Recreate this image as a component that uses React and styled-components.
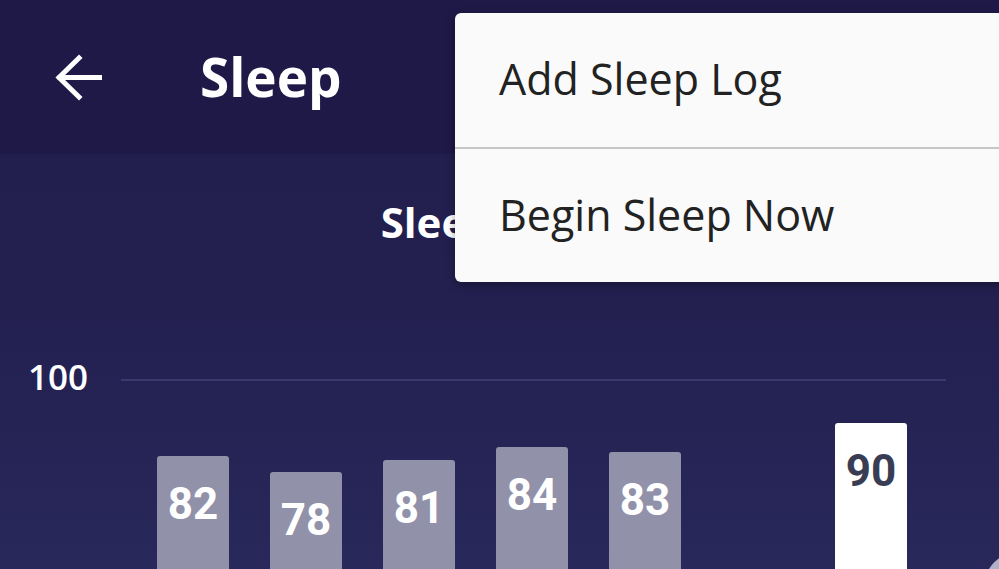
import React from "react";
import styled, { createGlobalStyle } from "styled-components";

const GlobalStyle = createGlobalStyle`
  html, body {
    margin: 0;
    padding: 0;
    background: #221c4c;
  }
  * { box-sizing: border-box; }
`;

const Screen = styled.div`
  position: relative;
  width: 999px;
  height: 569px;
  overflow: hidden;
  display: flex;
  flex-direction: column;
  font-family: "Open Sans", "Liberation Sans", sans-serif;
  background: linear-gradient(180deg, #221c4c 0%, #232050 55%, #28285a 100%);
`;

const Header = styled.header`
  height: 155px;
  flex: none;
  display: flex;
  align-items: center;
  padding-left: 54px;
  background: #1f1948;
  border-bottom: 1px solid #221d4c;
`;

const BackButton = styled.button`
  width: 48px;
  height: 48px;
  padding: 0;
  border: 0;
  background: none;
  display: flex;
  align-items: center;
  justify-content: center;
  cursor: pointer;
`;

const Title = styled.h1`
  margin: 0 0 0 98px;
  font-size: 53px;
  font-weight: 700;
  color: #ffffff;
  line-height: 1;
  padding-bottom: 2px;
`;

const Body = styled.main`
  flex: 1;
  display: flex;
  flex-direction: column;
`;

const ChartTitle = styled.h2`
  margin: 42px 0 0;
  text-align: center;
  font-size: 42px;
  font-weight: 700;
  color: #ffffff;
  line-height: 1.2;
`;

const Chart = styled.section`
  margin-top: 132px;
  flex: 1;
  display: grid;
  grid-template-columns: 121px 825px;
`;

const AxisLabel = styled.span`
  margin: -23px 0 0 28px;
  font-size: 35px;
  font-weight: 600;
  color: #ffffff;
  line-height: 1.2;
`;

const Plot = styled.div`
  border-top: 2px solid #3b396b;
  display: flex;
  align-items: flex-start;
  gap: 41px;
  padding-left: 36px;
`;

const Bar = styled.div`
  width: 72px;
  height: 300px;
  flex: none;
  border-radius: 3px 3px 0 0;
  background: ${(p) => (p.$today ? "#ffffff" : "#9291aa")};
  visibility: ${(p) => (p.$empty ? "hidden" : "visible")};
  text-align: center;
  padding-top: 22px;
  font-family: Roboto, "Liberation Sans", sans-serif;
  font-size: 44px;
  font-weight: 700;
  color: ${(p) => (p.$today ? "#393d54" : "#ffffff")};
`;

const Menu = styled.ul`
  position: absolute;
  top: 13px;
  left: 455px;
  width: 560px;
  margin: 0;
  padding: 0;
  list-style: none;
  background: #fafafa;
  border-radius: 6px;
  box-shadow: 0 3px 10px rgba(0, 0, 0, 0.35);
  overflow: hidden;
`;

const MenuItem = styled.li`
  height: ${(p) => p.$h}px;
  display: flex;
  align-items: center;
  padding-left: 44px;
  padding-bottom: 3px;
  font-size: 43px;
  font-weight: 400;
  color: #222222;
  border-top: ${(p) => (p.$divider ? "2px solid #c6c6c6" : "none")};
`;

const Fab = styled.div`
  position: absolute;
  left: 984px;
  top: 552px;
  width: 70px;
  height: 70px;
  border-radius: 50%;
  background: linear-gradient(135deg, #b9bad0, #8a8cad);
`;

const scores = [82, 78, 81, 84, 83, null, 90];

function ArrowLeft() {
  return (
    <svg width="48" height="48" viewBox="0 0 48 48" fill="none">
      <path
        d="M46 24.5H6M25 5L5 24.5L25 44"
        stroke="#ffffff"
        strokeWidth="5"
        strokeLinecap="square"
      />
    </svg>
  );
}

export default function App() {
  return (
    <>
      <GlobalStyle />
      <Screen>
        <Header>
          <BackButton aria-label="Back">
            <ArrowLeft />
          </BackButton>
          <Title>Sleep</Title>
        </Header>
        <Body>
          <ChartTitle>Sleep Score</ChartTitle>
          <Chart>
            <AxisLabel>100</AxisLabel>
            <Plot>
              {scores.map((s, i) => (
                <Bar
                  key={i}
                  $empty={s === null}
                  $today={i === scores.length - 1}
                  style={{ marginTop: s === null ? 0 : Math.round((100 - s) * 4.15) }}
                >
                  {s}
                </Bar>
              ))}
            </Plot>
          </Chart>
        </Body>
        <Menu>
          <MenuItem $h={134}>Add Sleep Log</MenuItem>
          <MenuItem $h={135} $divider>Begin Sleep Now</MenuItem>
        </Menu>
        <Fab />
      </Screen>
    </>
  );
}
